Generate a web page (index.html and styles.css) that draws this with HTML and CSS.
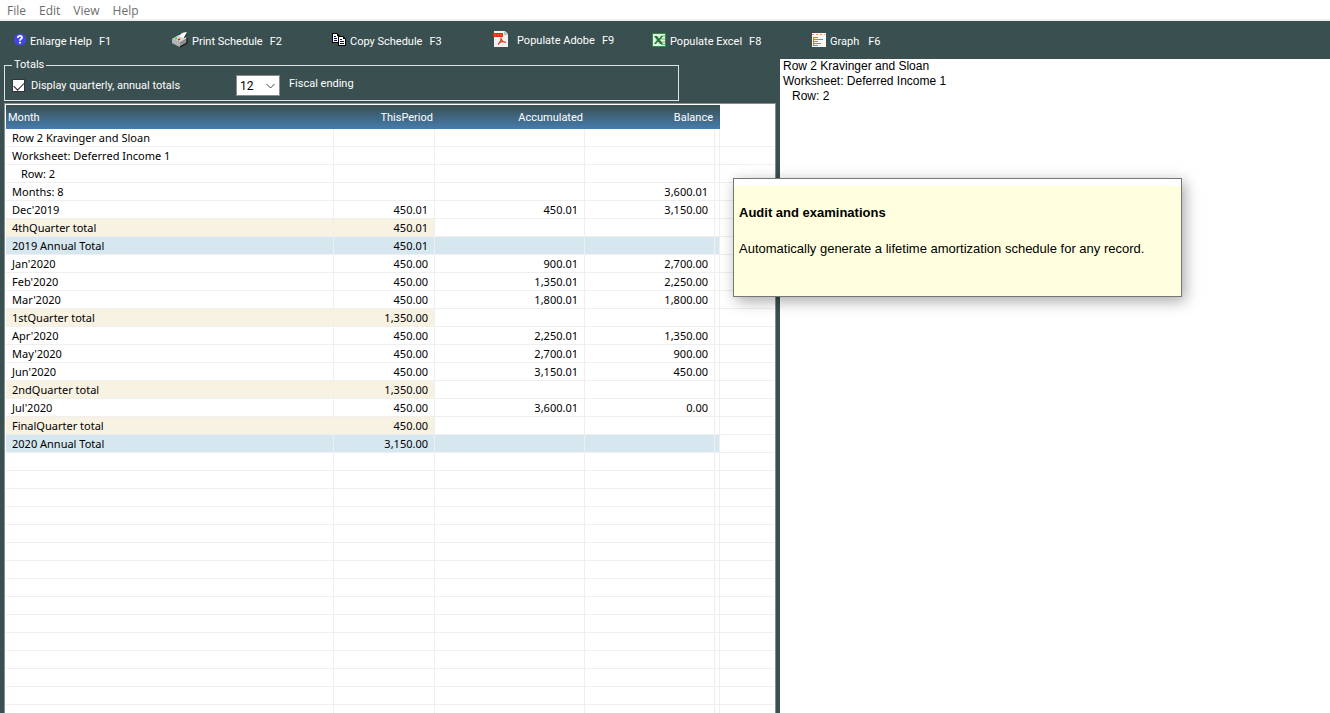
FILE: index.html
```
<!DOCTYPE html>
<html lang="en">
<head>
  <meta charset="UTF-8" />
  <meta name="viewport" content="width=device-width, initial-scale=1.0"/>
  <title>Amortization Schedule</title>
  <link rel="stylesheet" href="styles.css">
</head>
<body>
  <nav class="menubar">
    <button>File</button>
    <button>Edit</button>
    <button>View</button>
    <button>Help</button>
  </nav>

  <div class="toolbar">
    <button>
      <svg width="14" height="14" viewBox="0 0 14 14">
        <circle cx="8" cy="6.500" r="6" fill="#4343f0"/>
        <path d="M6 5V3.8Q6.200 2.900 8 2.900T10 4.400Q10 5.300 8.900 6Q8 6.600 8 7.800" fill="none" stroke="#fff" stroke-width="1.8"/>
        <rect x="7" y="8.800" width="2" height="1.700" fill="#fff"/>
      </svg>
      <span>Enlarge Help</span><span>F1</span>
    </button>
    <button>
      <svg width="16" height="16" viewBox="0 0 16 16">
        <path d="M0 7l7-4 8 3v5l-7 4-8-4z" fill="#8c8c8c"/>
        <path d="M0 7l7-4 8 3-7 4z" fill="#d8d8d8"/>
        <path d="M0 7l8 3v5l-8-4z" fill="#b4b4b4"/>
        <path d="M15 6v5l-7 4" fill="none" stroke="#111" stroke-width="1.2"/>
        <path d="M7 4l3-3 4-1 1 1-3 5z" fill="#fff"/>
        <path d="M15 1.2l-2.6 4.6" stroke="#111"/>
        <path d="M3 7l2-1" stroke="#10e030" stroke-width="1.600"/>
        <path d="M6 8l2-1" stroke="#e02020" stroke-width="1.400"/>
      </svg>
      <span>Print Schedule</span><span>F2</span>
    </button>
    <button>
      <svg width="14" height="14" viewBox="0 0 14 14">
        <path d="M0 0h5l3 3v7H0z" fill="#000"/>
        <path d="M1 1h4v2h2v6H1z" fill="#fff"/>
        <path d="M2 3h2v1H2zM2 5h3v1H2zM2 7h3v1H2z" fill="#10106a"/>
        <path d="M6 3h5l3 3v7H6z" fill="#000"/>
        <path d="M7 4h4v2h2v6H7z" fill="#fff"/>
        <path d="M8 6h2v1H8zM8 8h4v1H8zM8 10h4v1H8z" fill="#10106a"/>
      </svg>
      <span>Copy Schedule</span><span>F3</span>
    </button>
    <button class="adobe">
      <svg width="16" height="16" viewBox="0 0 16 16">
        <path d="M2 0h11l3 3v13H2z" fill="#f1f3f2"/>
        <path d="M12 0v4h4z" fill="#b9bfbd"/>
        <rect x="1" y="2" width="10" height="4" fill="#e9270f"/>
        <path d="M3 3v2M6 3v2M9 3v2" stroke="#ff6a50"/>
        <path d="M9 6.500Q9.500 10 6 13.500M9 7Q9.500 11 14 11.500M7 12Q10 10 13 11" fill="none" stroke="#e03c26" stroke-width="1.2"/>
      </svg>
      <span>Populate Adobe</span><span>F9</span>
    </button>
    <button>
      <svg width="14" height="14" viewBox="0 0 14 14">
        <rect width="14" height="14" fill="#2f8a43"/>
        <rect x="1" y="1" width="12" height="12" fill="#e4f2e4"/>
        <path d="M9 3h4M9 6h4M9 9h4M9 11.500h4" stroke="#6fb37a"/>
        <path d="M2 3h3l2 2.500L9 3h2L8 7l3 4H8L6 8.500 4 11H2l3-4z" fill="#1f7a35"/>
      </svg>
      <span>Populate Excel</span><span>F8</span>
    </button>
    <button class="graph">
      <svg width="14" height="14" viewBox="0 0 14 14">
        <rect width="14" height="14" fill="#fffaf5"/>
        <g fill="#e88a8a">
          <rect x="0" y="1" width="2" height="1"/>
          <rect x="4" y="1" width="2" height="1"/>
          <rect x="8" y="1" width="2" height="1"/>
          <rect x="12" y="1" width="1" height="1"/>
        </g>
        <g fill="#f07000">
          <rect x="1" y="4" width="5" height="1"/>
          <rect x="1" y="6" width="10" height="1"/>
          <rect x="1" y="8" width="5" height="1"/>
          <rect x="1" y="10" width="8" height="1"/>
          <rect x="1" y="12" width="5" height="1"/>
          <rect x="1" y="4" width="1" height="9"/>
        </g>
      </svg>
      <span>Graph</span><span>F6</span>
    </button>
  </div>

  <div class="main">
    <div class="left">
      <fieldset class="totals">
        <legend>Totals</legend>
        <input type="checkbox" id="showTotals" checked />
        <label for="showTotals">Display quarterly, annual totals</label>
        <div class="select-wrap">
          <select id="fiscal">
            <option>12</option>
          </select>
          <svg width="9" height="6" viewBox="0 0 9 6"><path d="M.5 1l4 4 4-4" fill="none" stroke="#444"/></svg>
        </div>
        <label class="fiscal-label" for="fiscal">Fiscal ending</label>
      </fieldset>

      <div class="grid">
        <table>
          <colgroup>
            <col class="c-month"><col class="c-period"><col class="c-accum"><col class="c-balance"><col class="c-gap"><col>
          </colgroup>
          <thead>
            <tr><th>Month</th><th>ThisPeriod</th><th>Accumulated</th><th>Balance</th><th></th><td></td></tr>
          </thead>
          <tbody id="rows"></tbody>
        </table>
      </div>
    </div>

    <div class="right">
      <p>Row 2 Kravinger and Sloan</p>
      <p>Worksheet: Deferred Income 1</p>
      <p class="indent">Row: 2</p>
    </div>
  </div>

  <div class="tip" role="tooltip">
    <div class="tip-body">
      <h2>Audit and examinations</h2>
      <p>Automatically generate a lifetime amortization schedule for any record.</p>
    </div>
  </div>

  <script>
    // month, this period, accumulated, balance, row type
    const schedule = [
      ["Row 2 Kravinger and Sloan", "", "", "", ""],
      ["Worksheet: Deferred Income 1", "", "", "", ""],
      ["Row: 2", "", "", "", "indent"],
      ["Months: 8", "", "", "3,600.01", ""],
      ["Dec'2019", "450.01", "450.01", "3,150.00", ""],
      ["4thQuarter total", "450.01", "", "", "quarter"],
      ["2019 Annual Total", "450.01", "", "", "annual"],
      ["Jan'2020", "450.00", "900.01", "2,700.00", ""],
      ["Feb'2020", "450.00", "1,350.01", "2,250.00", ""],
      ["Mar'2020", "450.00", "1,800.01", "1,800.00", ""],
      ["1stQuarter total", "1,350.00", "", "", "quarter"],
      ["Apr'2020", "450.00", "2,250.01", "1,350.00", ""],
      ["May'2020", "450.00", "2,700.01", "900.00", ""],
      ["Jun'2020", "450.00", "3,150.01", "450.00", ""],
      ["2ndQuarter total", "1,350.00", "", "", "quarter"],
      ["Jul'2020", "450.00", "3,600.01", "0.00", ""],
      ["FinalQuarter total", "450.00", "", "", "quarter"],
      ["2020 Annual Total", "3,150.00", "", "", "annual"]
    ];

    const body = document.getElementById("rows");

    function addRow(cells, type) {
      const tr = body.insertRow();
      tr.className = type;
      for (let i = 0; i < 6; i++) {
        tr.insertCell().textContent = cells[i] || "";
      }
    }

    schedule.forEach(row => addRow(row.slice(0, 4), row[4]));

    // blank lines down to the bottom of the window
    const blanks = Math.ceil(window.innerHeight / 18) - schedule.length;
    for (let i = 0; i < blanks; i++) {
      addRow([], "");
    }
  </script>
</body>
</html>
```
FILE: styles.css
```
* {
  box-sizing: border-box;
}

body {
  margin: 0;
  height: 100vh;
  display: flex;
  flex-direction: column;
  overflow: hidden;
  background-color: #3a4f50;
  font-family: Roboto, sans-serif;
  font-size: 11px;
}

button {
  border: none;
  padding: 0;
  background: none;
  font: inherit;
  cursor: pointer;
}

p {
  margin: 0;
}

.menubar {
  display: flex;
  flex: none;
  gap: 13px;
  height: 21px;
  padding: 2px 0 0 7px;
  background-color: #fff;
  border-bottom: 2px solid #f0f0f0;
}

.menubar button {
  color: #6d6d6d;
  font-family: "Open Sans", sans-serif;
  font-size: 12px;
}

.toolbar {
  display: flex;
  flex: none;
  height: 38px;
  padding: 2px 0 0 12px;
}

.toolbar button {
  display: flex;
  align-items: center;
  gap: 7px;
  width: 160px;
  color: #fff;
}

.toolbar svg {
  margin: 0 -3px 2px 0;
}

.toolbar .adobe {
  padding-bottom: 2px;
}

.toolbar .adobe svg,
.toolbar .graph span {
  margin-right: 2px;
}

.main {
  display: flex;
  flex: 1;
  min-height: 0;
}

.left {
  display: flex;
  flex-direction: column;
  flex: 0 1 780px;
  padding: 0 4px;
}

.totals {
  display: flex;
  align-items: center;
  flex: none;
  width: 675px;
  height: 42px;
  margin: 0 0 2px;
  padding: 4px 7px 0;
  border: 1px solid #dfe3e3;
  color: #fff;
}

.totals legend {
  padding: 0 2px;
  line-height: 12px;
}

.totals input {
  appearance: none;
  width: 13px;
  height: 13px;
  margin: 0 6px 0 0;
  border: 1px solid #333;
  background-color: #fff;
}

.totals input:checked::after {
  content: "";
  display: block;
  width: 9px;
  height: 5px;
  margin: 2px 1px;
  border-left: 1px solid #222;
  border-bottom: 1px solid #222;
  transform: rotate(-45deg);
}

.totals input + label {
  width: 205px;
}

.select-wrap {
  position: relative;
}

.select-wrap select {
  appearance: none;
  display: block;
  width: 44px;
  height: 21px;
  padding: 0 3px;
  border: 1px solid #8a8a8a;
  border-radius: 0;
  background-color: #fff;
  color: #000;
  font: inherit;
  font-size: 12px;
}

.select-wrap svg {
  position: absolute;
  right: 5px;
  top: 8px;
  pointer-events: none;
}

.fiscal-label {
  padding: 0 0 4px 9px;
}

.grid {
  flex: 1;
  min-height: 0;
  overflow: hidden;
  border: 1px solid #848c8c;
  border-bottom: none;
  padding: 1px 1px 0;
  background-color: #fff;
}

table {
  width: 100%;
  table-layout: fixed;
  border-spacing: 0;
  font-family: "Noto Sans", sans-serif;
  font-size: 11px;
  line-height: 17px;
}

.c-month { width: 328px; }
.c-period { width: 101px; }
.c-accum { width: 150px; }
.c-balance { width: 130px; }
.c-gap { width: 5px; }

th {
  height: 24px;
  padding: 0 2px;
  background: linear-gradient(#3a4f50, #467cae);
  color: #fff;
  font-family: Roboto, sans-serif;
  font-weight: normal;
  text-align: right;
}

th:first-child {
  text-align: left;
}

tbody td {
  height: 18px;
  padding: 0 6px;
  border-right: 1px solid #efefef;
  border-bottom: 1px solid #efefef;
  color: #000;
  text-align: right;
  white-space: pre;
}

tbody td:first-child {
  text-align: left;
}

tbody td:nth-child(5) {
  padding: 0;
}

tbody td:last-child {
  border-right: none;
}

.indent td:first-child {
  padding-left: 15px;
}

.quarter td:nth-child(-n+2) {
  background-color: #f8f2e3;
}

.annual td:nth-child(-n+5) {
  background-color: #d7e7f0;
}

.right {
  flex: 1;
  padding: 0 3px;
  background-color: #fff;
  font-family: "Liberation Sans", sans-serif;
  font-size: 12px;
  line-height: 15px;
}

.right .indent {
  padding-left: 9px;
}

/* floats over both panes */
.tip {
  position: absolute;
  left: 733px;
  top: 178px;
  width: 449px;
  padding-top: 7px;
  border: 1px solid #767676;
  background-color: #fff;
  box-shadow: 3px 4px 14px rgba(0, 0, 0, 0.35);
}

.tip-body {
  height: 110px;
  padding: 18px 5px;
  background-color: #ffffdf;
  font-family: "Liberation Sans", sans-serif;
  font-size: 13px;
  line-height: 18px;
}

.tip h2 {
  margin: 0 0 18px;
  font-size: 13px;
}
```
